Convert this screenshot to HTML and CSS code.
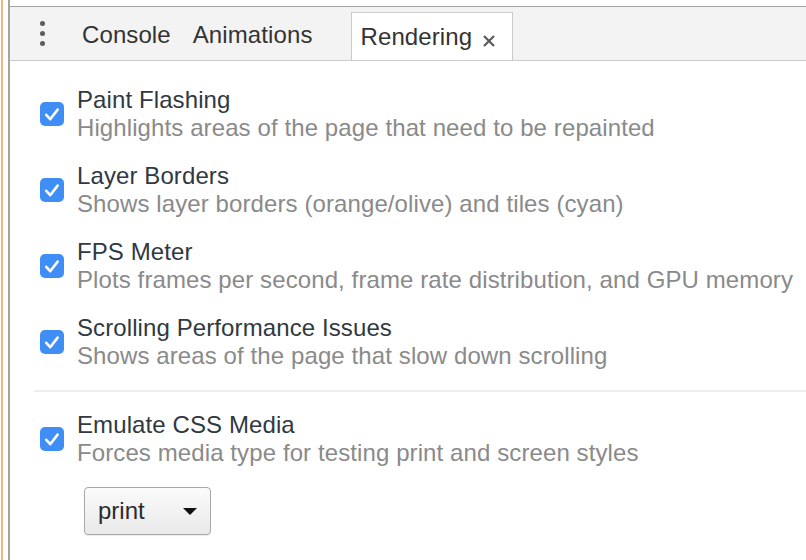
FILE: index.html
```html
<!DOCTYPE html>
<html>
<head>
<meta charset="utf-8">
<link rel="stylesheet" href="styles.css">
</head>
<body>
<div class="frame">
  <div class="edge"></div>
  <div class="panel">
    <div class="toolbar">
      <div class="menu-btn">
        <span class="dot"></span><span class="dot"></span><span class="dot"></span>
      </div>
      <div class="tab">Console</div>
      <div class="tab">Animations</div>
      <div class="tab tab-selected">Rendering
        <svg class="close" width="14" height="12" viewBox="0 0 14 12"><path d="M2 1 L12 11 M12 1 L2 11" stroke="#5a5a5a" stroke-width="2.2" fill="none"/></svg>
      </div>
    </div>
    <div class="content">
      <div class="item">
        <span class="checkbox"><svg width="24" height="24" viewBox="0 0 24 24"><path d="M6.2 12.8 L10.2 17.2 L17.6 7.6" stroke="#fff" stroke-width="2.6" fill="none" stroke-linecap="round" stroke-linejoin="round"/></svg></span>
        <div class="text">
          <div class="title">Paint Flashing</div>
          <div class="desc">Highlights areas of the page that need to be repainted</div>
        </div>
      </div>
      <div class="item">
        <span class="checkbox"><svg width="24" height="24" viewBox="0 0 24 24"><path d="M6.2 12.8 L10.2 17.2 L17.6 7.6" stroke="#fff" stroke-width="2.6" fill="none" stroke-linecap="round" stroke-linejoin="round"/></svg></span>
        <div class="text">
          <div class="title">Layer Borders</div>
          <div class="desc">Shows layer borders (orange/olive) and tiles (cyan)</div>
        </div>
      </div>
      <div class="item">
        <span class="checkbox"><svg width="24" height="24" viewBox="0 0 24 24"><path d="M6.2 12.8 L10.2 17.2 L17.6 7.6" stroke="#fff" stroke-width="2.6" fill="none" stroke-linecap="round" stroke-linejoin="round"/></svg></span>
        <div class="text">
          <div class="title">FPS Meter</div>
          <div class="desc">Plots frames per second, frame rate distribution, and GPU memory</div>
        </div>
      </div>
      <div class="item">
        <span class="checkbox"><svg width="24" height="24" viewBox="0 0 24 24"><path d="M6.2 12.8 L10.2 17.2 L17.6 7.6" stroke="#fff" stroke-width="2.6" fill="none" stroke-linecap="round" stroke-linejoin="round"/></svg></span>
        <div class="text">
          <div class="title">Scrolling Performance Issues</div>
          <div class="desc">Shows areas of the page that slow down scrolling</div>
        </div>
      </div>
      <div class="separator"></div>
      <div class="item">
        <span class="checkbox"><svg width="24" height="24" viewBox="0 0 24 24"><path d="M6.2 12.8 L10.2 17.2 L17.6 7.6" stroke="#fff" stroke-width="2.6" fill="none" stroke-linecap="round" stroke-linejoin="round"/></svg></span>
        <div class="text">
          <div class="title">Emulate CSS Media</div>
          <div class="desc">Forces media type for testing print and screen styles</div>
        </div>
      </div>
      <div class="select">
        <span class="select-value">print</span>
        <span class="arrow"></span>
      </div>
    </div>
  </div>
</div>
</body>
</html>
```

FILE: styles.css
```css
html, body {
  margin: 0;
  padding: 0;
  background: #fff;
  width: 806px;
  height: 560px;
  overflow: hidden;
  font-family: "Liberation Sans", Arial, sans-serif;
}

.frame {
  display: flex;
  height: 560px;
}

.edge {
  width: 2px;
  margin-left: 1px;
  background: #f6b57e;
}

.panel {
  margin-left: 5px;
  flex: 1;
  border-left: 2px solid #a4a4a4;
  display: flex;
  flex-direction: column;
}

.toolbar {
  margin-top: 6px;
  border-top: 1px solid #a4a4a4;
  border-bottom: 1px solid #cbcbcb;
  background: #f3f3f3;
  height: 53px;
  display: flex;
  align-items: stretch;
  font-size: 24px;
  color: #333;
  letter-spacing: 0.1px;
}

.menu-btn {
  width: 61px;
  display: flex;
  flex-direction: column;
  align-items: center;
  justify-content: center;
  gap: 4.7px;
  padding-left: 3px;
  box-sizing: border-box;
}

.dot {
  width: 5px;
  height: 5px;
  border-radius: 50%;
  background: #5c5c5c;
}

.tab {
  display: flex;
  align-items: center;
  padding: 0 11px;
  padding-top: 2px;
}

.tab-selected {
  margin-top: 5px;
  margin-left: 27px;
  padding: 0 16px 0 9px;
  background: #fff;
  border: 1px solid #cccccc;
  border-bottom: none;
  padding-top: 0;
}

.close {
  margin-left: 10px;
  margin-top: 8px;
}

.content {
  padding: 25px 0 0 24px;
}

.item {
  display: flex;
  align-items: center;
  gap: 13px;
  padding-left: 6px;
  margin-bottom: 20px;
}

.checkbox {
  width: 24px;
  height: 24px;
  border-radius: 5px;
  background: #3e8ef5;
  display: block;
  flex: none;
}

.checkbox svg {
  display: block;
}

.text {
  font-size: 24px;
  line-height: 28px;
  letter-spacing: 0.1px;
}

.title {
  color: #303942;
}

.desc {
  color: #8a8a8a;
}

.separator {
  height: 2px;
  background: #eeeeee;
  margin-bottom: 19px;
  margin-top: 0;
}

.select {
  margin-left: 50px;
  margin-top: 1px;
  width: 127px;
  height: 48px;
  box-sizing: border-box;
  border: 1px solid #a8a8a8;
  border-radius: 4px;
  background: linear-gradient(#fbfbfb, #e9e9e9);
  display: flex;
  align-items: center;
  padding-left: 13px;
  font-size: 24px;
  color: #2b2b2b;
  box-shadow: 0 1px 1px rgba(0,0,0,0.08);
}

.select-value {
  flex: 1;
}

.arrow {
  width: 0;
  height: 0;
  border-left: 7px solid transparent;
  border-right: 7px solid transparent;
  border-top: 7px solid #111;
  margin-right: 13px;
}
```
